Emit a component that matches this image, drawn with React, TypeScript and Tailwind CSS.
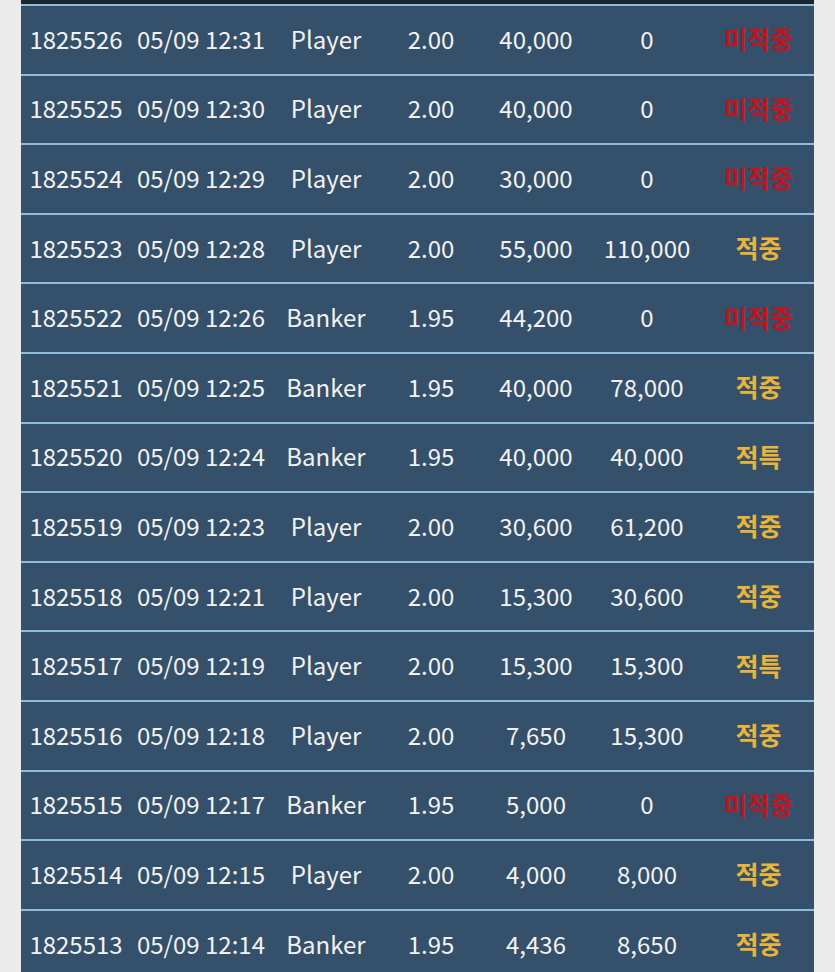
const rows = [
    ["1825526", "05/09 12:31", "Player", "2.00", "40,000", "0", "미적중"],
    ["1825525", "05/09 12:30", "Player", "2.00", "40,000", "0", "미적중"],
    ["1825524", "05/09 12:29", "Player", "2.00", "30,000", "0", "미적중"],
    ["1825523", "05/09 12:28", "Player", "2.00", "55,000", "110,000", "적중"],
    ["1825522", "05/09 12:26", "Banker", "1.95", "44,200", "0", "미적중"],
    ["1825521", "05/09 12:25", "Banker", "1.95", "40,000", "78,000", "적중"],
    ["1825520", "05/09 12:24", "Banker", "1.95", "40,000", "40,000", "적특"],
    ["1825519", "05/09 12:23", "Player", "2.00", "30,600", "61,200", "적중"],
    ["1825518", "05/09 12:21", "Player", "2.00", "15,300", "30,600", "적중"],
    ["1825517", "05/09 12:19", "Player", "2.00", "15,300", "15,300", "적특"],
    ["1825516", "05/09 12:18", "Player", "2.00", "7,650", "15,300", "적중"],
    ["1825515", "05/09 12:17", "Banker", "1.95", "5,000", "0", "미적중"],
    ["1825514", "05/09 12:15", "Player", "2.00", "4,000", "8,000", "적중"],
    ["1825513", "05/09 12:14", "Banker", "1.95", "4,436", "8,650", "적중"],
];

export default function App() {
    return (
        <div
            className="h-[972px] w-[835px] overflow-hidden bg-[#ebebeb]"
            style={{ fontFamily: '"Noto Sans CJK KR", "Noto Sans", sans-serif' }}
        >
            <div className="ml-[21px] w-[793px] bg-[#8fbcda]">
                <div className="h-[4px] bg-[#1b2631]" />
                {rows.map((row) => (
                    <div
                        key={row[0]}
                        className="mt-[2px] grid h-[67.6px] grid-cols-[110px_140px_110px_100px_110px_112px_111px] items-center bg-[#34506a] pb-[2px] text-[24px] leading-none text-[#f2f2f2]"
                    >
                        {row.slice(0, 6).map((cell, i) => (
                            <div key={i} className="text-center whitespace-nowrap">
                                {cell}
                            </div>
                        ))}
                        <div
                            className={
                                row[6] === "미적중"
                                    ? "text-center text-[25px] font-bold text-[#c0141f]"
                                    : "text-center text-[25px] font-bold text-[#eab33a]"
                            }
                        >
                            {row[6]}
                        </div>
                    </div>
                ))}
            </div>
        </div>
    );
}
